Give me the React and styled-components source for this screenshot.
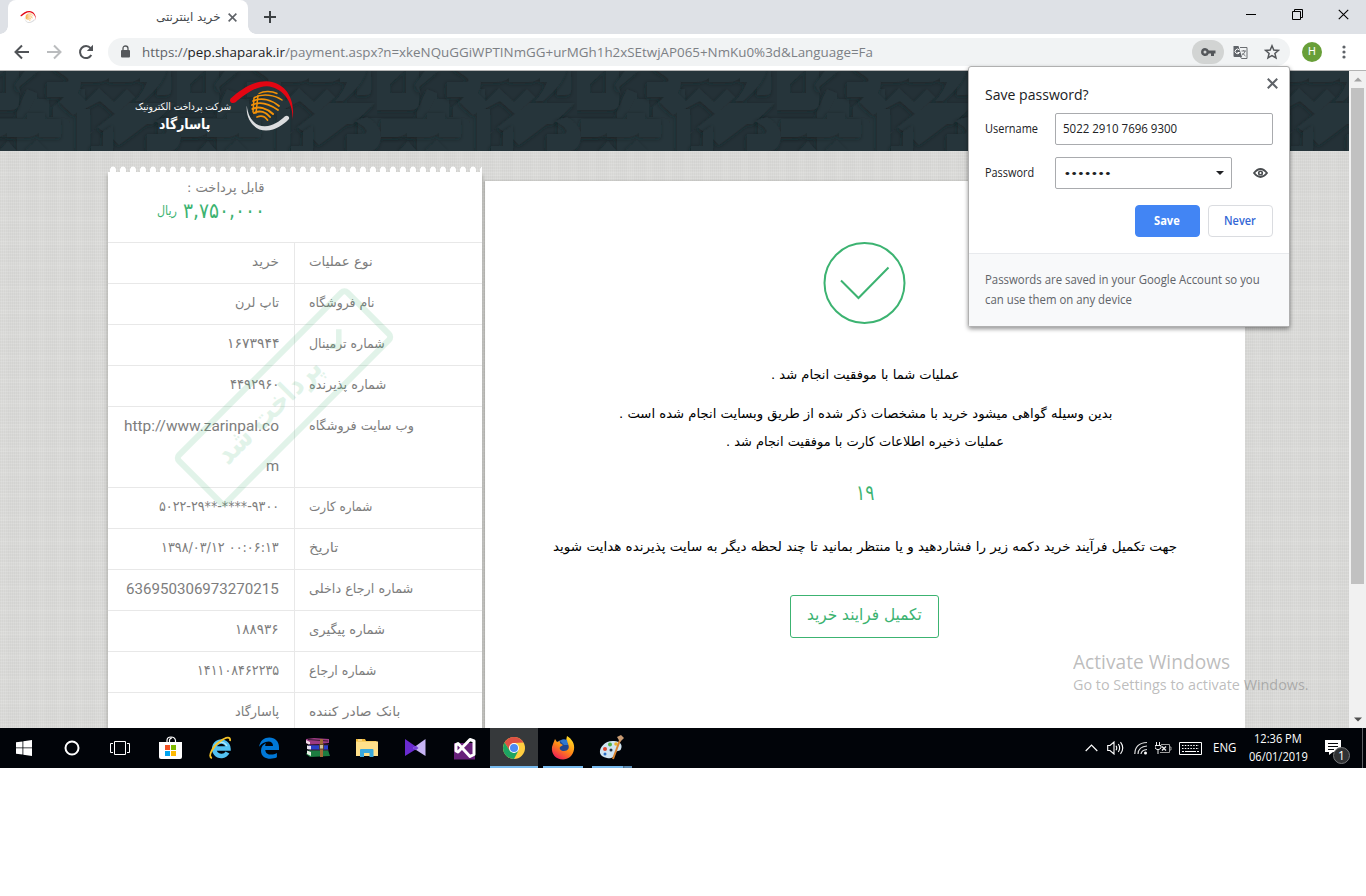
import React, { useLayoutEffect, useRef, useState } from "react";
import styled, { createGlobalStyle } from "styled-components";

const fa = `"DejaVu Sans Condensed", "DejaVu Sans", sans-serif`;
const ui = `"Open Sans", "Noto Sans", sans-serif`;
const green = "#3cb371";

const Global = createGlobalStyle`
  *, *::before, *::after { box-sizing: border-box; }
  body { margin: 0; background: #fff; font-family: ${ui}; overflow: hidden; }
  svg { display: block; flex: none; }
`;

/* ---------- text that keeps to a set width ---------- */
const FitBox = styled.span`
  display: inline-flex;
  justify-content: flex-start;
  direction: ltr;
  flex: none;
  width: ${(p) => p.$w}px;
  white-space: nowrap;
  color: ${(p) => p.$color || "inherit"};
  font-size: ${(p) => p.$size || 13}px;
  font-weight: ${(p) => p.$weight || 400};
  font-family: ${(p) => p.$font || "inherit"};
  line-height: 1.4;
`;
const FitInner = styled.span`
  flex: none;
  display: block;
  white-space: pre;
  transform-origin: 0 50%;
`;
function Fit({ w, size, color, weight, font, rtl, children }) {
  const ref = useRef(null);
  const [scale, setScale] = useState(1);
  useLayoutEffect(() => {
    const natural = ref.current.offsetWidth;
    if (natural) setScale(w / natural);
  }, [w, size]);
  return (
    <FitBox $w={w} $size={size} $color={color} $weight={weight} $font={font}>
      <FitInner ref={ref} dir={rtl ? "rtl" : "ltr"} style={{ transform: `scaleX(${scale})` }}>
        {children}
      </FitInner>
    </FitBox>
  );
}

/* ---------- browser chrome ---------- */
const Screen = styled.div`
  position: relative;
  width: 1366px;
  height: 768px;
  display: flex;
  flex-direction: column;
`;
const TabStrip = styled.div`
  height: 34px;
  background: #dee1e6;
  display: flex;
  align-items: flex-start;
  padding-left: 8px;
`;
const Tab = styled.div`
  position: relative;
  width: 240px;
  height: 34px;
  background: #fff;
  border-radius: 8px 8px 0 0;
  display: flex;
  align-items: center;
  padding: 0 11px 0 12px;
  color: #45494d;
  font-family: ${fa};
  &::before, &::after {
    content: "";
    position: absolute;
    bottom: 0;
    width: 8px;
    height: 8px;
  }
  &::before { left: -8px; background: radial-gradient(circle at 0 0, transparent 7.5px, #fff 8px); }
  &::after { right: -8px; background: radial-gradient(circle at 100% 0, transparent 7.5px, #fff 8px); }
`;
const Spring = styled.div`flex: 1;`;
const CloseSlot = styled.div`margin-left: 8px;`;
const NewTab = styled.div`margin: 10px 0 0 15px;`;
const WindowButton = styled.div`
  width: 46px;
  height: 29px;
  display: grid;
  place-items: center;
`;
const Toolbar = styled.div`
  height: 37px;
  background: #fff;
  border-bottom: 1px solid #b3b3b3;
  display: flex;
  align-items: center;
`;
const NavButton = styled.div`
  width: 32px;
  display: grid;
  place-items: center;
  margin-left: ${(p) => p.$first ? 6 : 0}px;
`;
const Omnibox = styled.div`
  width: 1182px;
  height: 28px;
  margin-left: 6px;
  border-radius: 14px;
  background: #f1f3f4;
  display: flex;
  align-items: center;
  padding: 0 2px 0 12px;
`;
const Url = styled.div`
  margin-left: 10px;
  padding-bottom: 2px;
  color: #7c8085;
  b { font-weight: 400; color: #202124; }
  i { font-style: normal; color: #5f6368; }
`;
const OmniAction = styled.div`
  width: 32px;
  height: 24px;
  border-radius: 12px;
  display: grid;
  place-items: center;
  background: ${(p) => p.$on ? "#d2d4d3" : "transparent"};
`;
const Avatar = styled.div`
  width: 20px;
  height: 20px;
  border-radius: 50%;
  background: #689f38;
  color: #fff;
  font: 11px/20px Roboto, sans-serif;
  text-align: center;
  margin: 0 20px 0 12px;
`;

/* ---------- page ---------- */
const Viewport = styled.div`
  height: 657px;
  display: flex;
  overflow: hidden;
`;
const Page = styled.div`
  width: 1349px;
  height: 657px;
  overflow: hidden;
  background-color: #d8d8d6;
  background-image:
    repeating-linear-gradient(0deg, rgba(255,255,255,.12) 0 1px, transparent 1px 3px),
    repeating-linear-gradient(90deg, rgba(120,120,115,.05) 0 1px, transparent 1px 2px),
    repeating-linear-gradient(90deg, rgba(255,255,255,.06) 0 7px, transparent 7px 19px),
    repeating-linear-gradient(0deg, rgba(255,255,255,.06) 0 5px, transparent 5px 23px);
`;
const Banner = styled.header`
  position: relative;
  height: 80px;
  background: #263238;
`;
const BannerArt = styled.svg`
  position: absolute;
  inset: 0;
`;
const Brand = styled.div`
  position: relative;
  display: flex;
  padding: 7px 0 0 132px;
  color: #fff;
  font-family: ${fa};
`;
const BrandNames = styled.div`
  width: 96px;
  padding: 22px 0 0 3px;
  display: flex;
  flex-direction: column;
  align-items: flex-start;
`;
const BrandBold = styled.div`padding-left: 24px;`;
const Columns = styled.main`
  display: flex;
  align-items: flex-start;
  padding-left: 108px;
`;
const Receipt = styled.section`
  position: relative;
  width: 374px;
  margin-top: 15px;
  color: #7d7d7d;
  font-family: ${fa};
`;
const Scallops = styled.div`
  height: 6px;
  background: radial-gradient(ellipse 3.6px 6px at 5px 6px, #fff 88%, rgba(190,190,185,.7) 100%, transparent) 0 0 / 10px 6px;
`;
const Sheet = styled.div`
  background: #fff;
  box-shadow: 0 4px 3px 1px rgba(90,90,80,.3);
  height: 600px;
`;
const AmountBlock = styled.div`
  height: 71px;
  padding: 7px 217px 0 0;
  border-bottom: 1px solid #e8e8e8;
  display: flex;
  flex-direction: column;
  align-items: flex-end;
`;
const Amount = styled.div`
  display: flex;
  align-items: center;
  gap: 6px;
  height: 27px;
  color: ${green};
`;
const Row = styled.div`
  display: flex;
  height: ${(p) => p.$tall ? 81 : 41}px;
  border-bottom: 1px solid #e8e8e8;
`;
const Value = styled.div`
  width: 187px;
  padding: 0 15px 0 0;
  border-right: 1px solid #e8e8e8;
  display: flex;
  flex-direction: column;
  align-items: flex-end;
`;
const Line = styled.div`
  height: 40px;
  padding-bottom: 2px;
  display: flex;
  align-items: center;
`;
const Label = styled.div`
  height: 40px;
  padding: 0 0 2px 14px;
  display: flex;
  align-items: center;
`;
const Stamp = styled.div`
  position: absolute;
  left: 54px;
  top: 195px;
  width: 244px;
  height: 73px;
  border: 6px solid ${green};
  border-radius: 7px;
  opacity: 0.15;
  transform: rotate(-45deg);
  color: ${green};
  display: flex;
  align-items: center;
  gap: 17px;
  padding: 0 0 4px 28px;
  pointer-events: none;
`;
const Result = styled.section`
  width: 760px;
  height: 600px;
  margin: 30px 0 0 3px;
  background: #fff;
  box-shadow: -1px 0 2px rgba(90,90,80,.35);
  color: #000;
  font-family: ${fa};
  display: flex;
  flex-direction: column;
  align-items: center;
  padding-top: 60px;
`;
const Para = styled.div`
  height: 28px;
  margin-top: ${(p) => p.$gap || 0}px;
  display: flex;
  align-items: center;
`;
const Finish = styled.button`
  width: 149px;
  height: 43px;
  margin: 34px 2px 0 0;
  padding: 0 0 3px;
  border: 1px solid ${green};
  border-radius: 3px;
  background: #fff;
  color: ${green};
  font-family: inherit;
  display: flex;
  align-items: center;
  justify-content: center;
`;
const ScrollBar = styled.div`
  width: 17px;
  height: 657px;
  background: #f1f1f1;
  display: flex;
  flex-direction: column;
  align-items: center;
`;
const ScrollArrow = styled.div`
  height: 17px;
  display: grid;
  place-items: center;
`;
const Thumb = styled.div`
  width: 13px;
  height: 496px;
  background: #c1c1c1;
`;

/* ---------- password bubble ---------- */
const Bubble = styled.div`
  position: absolute;
  left: 968px;
  top: 66px;
  width: 322px;
  height: 261px;
  border: 1px solid #b0b0b0;
  border-radius: 3px;
  background: #fff;
  box-shadow: 0 2px 4px rgba(0,0,0,.42);
  color: #202124;
  display: flex;
  flex-direction: column;
`;
const BubbleHead = styled.div`
  display: flex;
  justify-content: space-between;
  height: 46px;
  padding: 11px 11px 0 16px;
`;
const BubbleTitle = styled.div`margin-top: 5px;`;
const FieldRow = styled.div`
  display: flex;
  align-items: center;
  height: 32px;
  padding-left: 16px;
  margin-bottom: ${(p) => p.$gap}px;
`;
const FieldName = styled.div`width: 70px; display: flex;`;
const Field = styled.div`
  width: ${(p) => p.$w}px;
  height: 32px;
  border: 1px solid #a9abae;
  border-radius: 2px;
  display: flex;
  align-items: center;
  justify-content: space-between;
  padding: 0 7px 0 ${(p) => p.$pad || 7}px;
`;
const Eye = styled.div`margin-left: 21px;`;
const Actions = styled.div`
  display: flex;
  justify-content: flex-end;
  gap: 8px;
  padding-right: 16px;
`;
const Button = styled.div`
  width: 65px;
  height: 32px;
  border-radius: 4px;
  display: grid;
  place-items: center;
  padding-right: 1px;
  background: ${(p) => p.$primary ? "#4285f4" : "#fff"};
  border: 1px solid ${(p) => p.$primary ? "#4285f4" : "#dadce0"};
  color: ${(p) => p.$primary ? "#fff" : "#3367d6"};
`;
const BubbleFoot = styled.div`
  margin-top: 16px;
  flex: 1;
  border-top: 1px solid #e8eaed;
  background: #f8f9fa;
  color: #5f6368;
  padding: 16px;
  display: flex;
  flex-direction: column;
`;
const FootLine = styled.div`height: 20px; display: flex; align-items: center;`;

const Activation = styled.div`
  position: absolute;
  left: 1073px;
  top: 649px;
  color: rgba(125,125,125,.52);
  display: flex;
  flex-direction: column;
  span:last-child { line-height: 1.32; }
`;

/* ---------- taskbar ---------- */
const Taskbar = styled.footer`
  height: 40px;
  background: #010409;
  display: flex;
  align-items: stretch;
  color: #fff;
`;
const TaskSlot = styled.div`
  position: relative;
  width: ${(p) => p.$w || 49}px;
  display: grid;
  place-items: center;
  background: ${(p) => p.$active ? "linear-gradient(90deg, transparent 1px, #36393b 1px)" : "none"};
  margin-left: ${(p) => p.$shift || 0}px;
`;
const Running = styled.div`
  position: absolute;
  bottom: 0;
  left: ${(p) => p.$x}px;
  width: ${(p) => p.$w}px;
  height: 2px;
  background: ${(p) => p.$stack ? "linear-gradient(90deg,#76b9ed 31px,#44637c 31px,#5888b0 33px)" : "#76b9ed"};
`;
const Tray = styled.div`
  display: flex;
  align-items: center;
  width: 282px;
`;
const TrayItem = styled.div`
  width: ${(p) => p.$w}px;
  display: grid;
  place-items: center;
`;
const Clock = styled.div`
  width: 66px;
  display: flex;
  flex-direction: column;
  align-items: center;
  gap: 1px;
`;
const Badge = styled.div`
  position: absolute;
  left: 16px;
  top: 19px;
  width: 17px;
  height: 17px;
  border: 1px solid #77797b;
  border-radius: 50%;
  background: #303234;
  font: 12px/15px ${ui};
  text-align: center;
`;
const NoticeSlot = styled.div`
  position: relative;
  width: 45px;
  height: 40px;
  padding: 12px 0 0 8px;
`;
const DesktopEdge = styled.div`
  width: 1px;
  height: 40px;
  background: #5d6064;
`;

/* ---------- drawings ---------- */
const Cross = ({ s = 8, c = "#5f6368", w = 1.6 }) => (
  <svg width={s} height={s} viewBox="0 0 10 10" stroke={c} strokeWidth={(w * 10) / s}>
    <path d="M.7.7 9.3 9.3M9.3.7.7 9.3" />
  </svg>
);

const Logo = ({ w, h }) => (
  <svg width={w} height={h} viewBox="228 78 70 56" fill="none">
    <path d="M230.600 98.600C240 90 253 81 266.500 81.200C284 81.800 296 97 292.500 120C293.500 101 282 87.500 267 86.200C256 86 244 95 235.600 102.200C232 104.500 228.500 101.500 230.600 98.600Z" fill="#e30613" />
    <path d="M246.800 105.500C245.500 119 254 130.500 266 130.500C276 130.500 283.500 124.500 288.500 119.600C290.500 117 287.500 114.500 285 116.200C279 121.500 273.500 125.800 265 126.300C255 126.600 248 118 246.800 105.500Z" fill="#dcdddf" />
    <g stroke="#f39208" strokeLinecap="round">
      <path d="M259 93.500C264 90.500 272 91 277 93.500" strokeWidth="1.400" />
      <path d="M254.500 97.500C263 93 275 95 282 100" strokeWidth="1.500" />
      <path d="M253 101C262 97 272 100 279 106" strokeWidth="1.700" />
      <path d="M252 105C260 101 270 104.500 278 110" strokeWidth="1.800" />
      <path d="M252.500 109C259 105.500 267 108.500 273 114" strokeWidth="2" />
      <path d="M254 113C260 110 266 112 270 117" strokeWidth="2" />
      <path d="M257 117C262 115 265 116.500 267.500 120" strokeWidth="1.800" />
      <path d="M254 98 253 112M258 95.500 256 113" strokeWidth="1.500" />
    </g>
  </svg>
);

const BannerPattern = () => (
  <BannerArt width="1349" height="80">
    <defs>
      <filter id="emboss" x="-10%" y="-10%" width="120%" height="130%">
        <feDropShadow dx="-1" dy="1.500" stdDeviation="2" floodColor="#101d23" floodOpacity=".5" />
      </filter>
      <g id="letters" fill="#28343a">
        <g filter="url(#emboss)">
          <path d="M50 18 60 22V46H76V36L96 18H108V80H40V40Z" />
          <path d="M-6 47H48L58 28H72V47H84Q92 46 93 52V70L82 80 74 72 68 66H-6Z" />
          <path d="M181 47H214V66H181Z" />
          <path d="M-12 0H-6V20Q-6 24-12 24H-20V16Z" />
          <path d="M188 0H194V20Q194 24 188 24H180V16Z" />
        </g>
        <g filter="url(#emboss)">
          <path fillRule="evenodd" d="M0 0H42V31Q42 39 34 39H0ZM13 22H29V0H27L13 13Z" />
          <path d="M70 11H90Q94 9 88 5L74-4H104V10Q104 26 90 26H70Z" />
          <path d="M104-4H190Q188 12 166 30H158Q166 22 170 11H163V7Q158 11 152 11H132V7Q127 11 120 11H104Z" />
          <path d="M82 31 96 17 109 30 122 17 137 31 150 18 158 26 139 44 123 30 96 44Z" />
          <path d="M100 38H113V62L152 32H198L176 53H170L142 74 134 66 120 56 113 63V80H100Z" />
        </g>
        <g filter="url(#emboss)">
          <path d="M170 63H188Q192 60 186 55L178 50 190 46Q204 54 204 66 202 80 192 80H170Z" />
          <path d="M-30 63H-12Q-8 60-14 55L-22 50-10 46Q4 54 4 66 2 80-8 80H-30Z" />
          <path d="M4 48H50V42H68V48H84V66H62V62Q58 65 52 66H30V62Q26 65 20 66H4Z" />
          <path d="M22 80 31 70 40 80ZM48 80 60 69 71 80Z" />
          <path d="M42 16 54 6Q60 0 64 0H48L38 14 44 24Z" />
          <path d="M114 75H126V61L136 54V80H114Z" />
        </g>
      </g>
      <pattern id="calligraphy" x="-23" width="200" height="80" patternUnits="userSpaceOnUse">
        <rect width="200" height="80" fill="#243137" />
        <use href="#letters" />
      </pattern>
    </defs>
    <rect width="1349" height="80" fill="url(#calligraphy)" />
  </BannerArt>
);

const StoreIcon = () => (
  <svg width="24" height="24" viewBox="0 0 24 24">
    <path d="M8 6V4.500Q8 1 12 1T16.500 4.500V6M10.500 6V4Q11 2 13 2" fill="none" stroke="#fff" strokeWidth="1.200" />
    <path d="M0 6H23V21Q23 23 21 23H2Q0 23 0 21Z" fill="#fff" />
    <path d="M6 9h5v5H6z" fill="#f25022" /><path d="M12 9h5v5h-5z" fill="#7fba00" />
    <path d="M6 15h5v5H6z" fill="#00a4ef" /><path d="M12 15h5v5h-5z" fill="#ffb900" />
  </svg>
);
const IeIcon = () => (
  <svg width="24" height="24" viewBox="0 0 24 24" fill="none">
    <path d="M19.500 16.500A7.200 7.200 0 1 1 20.500 12.500H7" stroke="#53c2f1" strokeWidth="4.400" />
    <path d="M6 12A7 7 0 0 1 19 10" stroke="#b5ebff" strokeWidth="1.200" />
    <path d="M4 22C-1 21 5 10 12 5.500 18 1 23 0 22 5" stroke="#f5c327" strokeWidth="1.800" />
  </svg>
);
const EdgeIcon = () => (
  <svg width="22" height="22" viewBox="0 0 22 22">
    <path d="M1.200 9.800C2 3.500 6.500.5 11.300.5 17 .5 21 4.300 21 10.200V12.900H7.300C7.400 18 14.200 18.800 18.900 16V20.300C13 23.200 3 22.200 3 13.700 3 9.800 5.200 7.500 8 6.100 7.400 7 7.200 8 7.200 9.100H15C15 5.900 13.400 4.400 10.500 4.400 6.500 4.600 3.600 6.300 1.200 9.800Z" fill="#0078d7" />
  </svg>
);
const RarIcon = () => (
  <svg width="24" height="20" viewBox="0 0 24 20">
    <path d="M0 1 8 0 23 1V5L4 7 0 5Z" fill="#9d3b84" /><path d="M0 2 4 4V7L0 5Z" fill="#f2dbe8" />
    <path d="M3 7H22V12H3Z" fill="#2a3fc9" /><path d="M1 7.500 5 8V12L1 11Z" fill="#e9e3f2" />
    <path d="M3 12H22L24 18 4 19 0 16Z" fill="#1c7d40" /><path d="M1 12.500 5 14V18L1 16Z" fill="#e7f0e6" />
    <path d="M3 6.800H23M3 12H23M2 1.500 22 3" stroke="#3b1a33" strokeWidth="1" />
    <path d="M14 1H17V19H14Z" fill="#a06c36" /><path d="M13.500 6.500H17.500V11H13.500Z" fill="#cfc19b" stroke="#553719" strokeWidth=".8" />
  </svg>
);
const FolderIcon = () => (
  <svg width="22" height="20" viewBox="0 0 22 20">
    <path d="M0 1H9L10 3H20.500V7H0Z" fill="#f0b93a" /><path d="M0 3.500H22V18H0Z" fill="#ffe08a" />
    <path d="M2 2H6" stroke="#fff3cc" />
    <path d="M4 19V12Q4 11 5 11H16.500Q17.500 11 17.500 12V19H13.500V15H8V19Z" fill="#3aa9dc" />
  </svg>
);
const KmIcon = () => (
  <svg width="22" height="20" viewBox="0 0 22 20">
    <path d="M0 1 13 10 0 18Z" fill="#6a2bd0" /><path d="M20.500 1V18L8 10Z" fill="#c7b5f5" /><path d="M8 10 11 7.800 13.500 10 11 12.200Z" fill="#7845d8" />
  </svg>
);
const VsIcon = () => (
  <svg width="24" height="24" viewBox="0 0 24 24">
    <path d="M1 7H22V23.500H1Z" fill="#68217a" />
    <path d="M3 8.500V15L5 16 17 3.500 21 5V18.500L17 20.500 5 7.500Z" fill="none" stroke="#fff" strokeWidth="3" strokeLinejoin="round" />
  </svg>
);
const ChromeIcon = () => (
  <svg width="22" height="22" viewBox="0 0 22 22">
    <circle cx="11" cy="11" r="11" fill="#ffcd40" />
    <path d="M1.500 5.500A11 11 0 0 1 20.500 5.500L11 6 6.700 13.500Z" fill="#dd5144" />
    <path d="M1.500 5.500A11 11 0 0 0 11 22L15.500 13.500 11 15.500 6.700 13.500Z" fill="#1da462" />
    <circle cx="11" cy="11" r="5" fill="#fff" /><circle cx="11" cy="11" r="4" fill="#4c8bf5" />
  </svg>
);
const FirefoxIcon = () => (
  <svg width="24" height="24" viewBox="0 0 24 24">
    <defs><linearGradient id="fox" x1=".8" y1="0" x2=".2" y2="1"><stop stopColor="#ffe226" /><stop offset=".5" stopColor="#ff8a16" /><stop offset="1" stopColor="#ed145b" /></linearGradient></defs>
    <circle cx="12" cy="12.500" r="9" fill="#20458f" />
    <path d="M2 8 4 3 6 6 9 5C8 8 11 8 12 9L9 11C8 13 10 15 13 15 17 15 19 12 17 8L15 5 16 0C21 3 24 8 23 13.500 22 20 17 23.500 12 23.500 5 23.500 0 18 1 11Z" fill="url(#fox)" />
    <path d="M9 5Q12 2 16 4L17 9 13 9Z" fill="#2f77cf" />
  </svg>
);
const PaintIcon = () => (
  <svg width="26" height="26" viewBox="0 0 26 26">
    <path d="M1 18C0 12 7 5 15 6 21 6 24 10 22 14 21 17 17 15 16 18 15 23 11 24 8 23 4 22 2 21 1 18Z" fill="#cfe4f2" />
    <circle cx="6" cy="14" r="2" fill="#e0442e" /><circle cx="11" cy="9.500" r="2" fill="#52b148" /><circle cx="17" cy="9" r="1.800" fill="#eeb429" /><circle cx="6" cy="19" r="1.500" fill="#2d6fc4" /><circle cx="12" cy="15" r="1.500" fill="#253545" />
    <path d="M21 5 14 24" stroke="#d9832e" strokeWidth="2" /><path d="M18 2 22 0 25 3 21 7Z" fill="#c89a72" />
  </svg>
);

const apps = [
  [StoreIcon], [IeIcon], [EdgeIcon], [RarIcon], [FolderIcon], [KmIcon], [VsIcon],
  [ChromeIcon, { x: 1, w: 48 }, true],
  [FirefoxIcon, { x: 5, w: 40 }],
  [PaintIcon, { x: 5, w: 40, stack: true }],
];

const rows = [
  ["نوع عملیات", 64, "خرید", 27, true],
  ["نام فروشگاه", 65, "تاپ لرن", 44, true],
  ["شماره ترمینال", 76, "۱۶۷۳۹۴۴", 52],
  ["شماره پذیرنده", 77, "۴۴۹۲۹۶۰", 49],
  ["وب سایت فروشگاه", 105, "http://www.zarinpal.co", 155, false, 15, "m"],
  ["شماره کارت", 63, "۵۰۲۲-۲۹**-****-۹۳۰۰", 120],
  ["تاریخ", 29, "۱۳۹۸/۰۳/۱۲ ۰۰:۰۶:۱۳", 118],
  ["شماره ارجاع داخلی", 104, "636950306973270215", 153, false, 15],
  ["شماره پیگیری", 76, "۱۸۸۹۳۶", 44],
  ["شماره ارجاع", 67, "۱۴۱۱۰۸۴۶۲۲۳۵", 82],
  ["بانک صادر کننده", 91, "پاسارگاد", 44, true],
];

export default function App() {
  return (
    <>
      <Global />
      <Screen>
        <TabStrip>
          <Tab>
            <Logo w={17} h={14} />
            <Spring />
            <Fit w={64} size={12} rtl>خرید اینترنتی</Fit>
            <CloseSlot><Cross s={9} /></CloseSlot>
          </Tab>
          <NewTab>
            <svg width="14" height="14" viewBox="0 0 14 14" stroke="#3c4043" strokeWidth="2"><path d="M7 1V13M1 7H13" /></svg>
          </NewTab>
          <Spring />
          <WindowButton><svg width="11" height="11" stroke="#000"><path d="M0 5.500H10" /></svg></WindowButton>
          <WindowButton><svg width="11" height="11" stroke="#000" fill="none"><path d="M.5 2.500H8.500V10.500H.5ZM2.500 2.500V.5H10.500V8.500H8.500" /></svg></WindowButton>
          <WindowButton><Cross s={11} c="#000" w={1.1} /></WindowButton>
        </TabStrip>
        <Toolbar>
          <NavButton $first>
            <svg width="16" height="16" viewBox="0 0 16 16" fill="none" stroke="#505357" strokeWidth="2"><path d="M15 8H2M8 1.500 1.500 8 8 14.500" /></svg>
          </NavButton>
          <NavButton>
            <svg width="16" height="16" viewBox="0 0 16 16" fill="none" stroke="#babcbe" strokeWidth="2"><path d="M1 8H14M8 1.500 14.500 8 8 14.500" /></svg>
          </NavButton>
          <NavButton>
            <svg width="16" height="16" viewBox="0 0 16 16" fill="none" stroke="#505357" strokeWidth="2"><path d="M13.300 11A6 6 0 1 1 12.600 4.200" /><path d="M15 .8V7H8.800Z" fill="#505357" stroke="none" /></svg>
          </NavButton>
          <Omnibox>
            <svg width="12" height="14" viewBox="0 0 12 14"><path d="M2 5H9Q10 5 10 6V11.500Q10 12.500 9 12.500H2Q1 12.500 1 11.500V6Q1 5 2 5Z" fill="#55585b" /><path d="M3 5V3.500Q3 1 5.500 1T8 3.500V5" fill="none" stroke="#55585b" strokeWidth="1.300" /></svg>
            <Url>
              <Fit w={731} size={13.5} font={ui}>
                <i>https://</i><b>pep.shaparak.ir</b>/payment.aspx?n=xkeNQuGGiWPTINmGG+urMGh1h2xSEtwjAP065+NmKu0%3d&amp;Language=Fa
              </Fit>
            </Url>
            <Spring />
            <OmniAction $on>
              <svg width="15" height="10" viewBox="0 0 15 10"><path fillRule="evenodd" d="M4 1A4 4 0 0 1 7.800 3.500H14.500V6.500H13V9H10V6.500H7.800A4 4 0 1 1 4 1ZM4 3.500A1.500 1.500 0 1 0 4 6.500 1.500 1.500 0 0 0 4 3.500Z" fill="#54575a" /></svg>
            </OmniAction>
            <OmniAction>
              <svg width="15" height="15" viewBox="0 0 15 15" fill="none"><path d="M7 2.500H14V13.500H8.500L7 11" stroke="#6b6e72" /><path d="M.5 1H5.500L9 12H1.500Q.5 12 .5 11Z" fill="#5f6368" /><path d="M6.300 5A2.300 2.300 0 1 0 6.500 7.500H4.500" stroke="#fff" /><path d="M8.500 6H13M10.700 5V6M12 6Q11.500 9 9 10M9.500 8Q11 10 12.500 11" stroke="#6b6e72" strokeWidth=".9" /></svg>
            </OmniAction>
            <OmniAction>
              <svg width="16" height="16" viewBox="0 0 16 16" fill="none" stroke="#54575a" strokeWidth="1.500"><path d="M8 1.800 9.800 6 14.400 6.400 10.900 9.400 12 13.900 8 11.500 4 13.900 5.100 9.400 1.600 6.400 6.200 6Z" /></svg>
            </OmniAction>
          </Omnibox>
          <Avatar>H</Avatar>
          <svg width="4" height="14" fill="#5f6368"><circle cx="2" cy="2" r="1.600" /><circle cx="2" cy="7" r="1.600" /><circle cx="2" cy="12" r="1.600" /></svg>
        </Toolbar>

        <Viewport>
          <Page>
            <Banner>
              <BannerPattern />
              <Brand>
                <BrandNames>
                  <Fit w={96} size={10} rtl>شرکت پرداخت الکترونیک</Fit>
                  <BrandBold><Fit w={51} size={14} weight={700} rtl>پاسارگاد</Fit></BrandBold>
                </BrandNames>
                <Logo w={70} h={56} />
              </Brand>
            </Banner>
            <Columns>
              <Receipt>
                <Scallops />
                <Sheet>
                  <AmountBlock>
                    <Fit w={78} size={13} rtl>قابل پرداخت :</Fit>
                    <Amount>
                      <Fit w={20} size={13} rtl>ریال</Fit>
                      <Fit w={82} size={21.5}>۳,۷۵۰,۰۰۰</Fit>
                    </Amount>
                  </AmountBlock>
                  {rows.map(([label, lw, value, vw, rtl, latin, rest]) => (
                    <Row key={label} $tall={!!rest}>
                      <Value>
                        <Line><Fit w={vw} size={latin || (rtl ? 13 : 14)} rtl={rtl} font={latin && "Roboto, sans-serif"}>{value}</Fit></Line>
                        {rest && <Line><Fit w={13} size={15} font="Roboto, sans-serif">{rest}</Fit></Line>}
                      </Value>
                      <Label><Fit w={lw} size={13} rtl>{label}</Fit></Label>
                    </Row>
                  ))}
                </Sheet>
                <Stamp>
                  <Fit w={136} size={30} weight={700} rtl>پرداخت شد</Fit>
                  <svg width="26" height="26" viewBox="0 0 26 26" fill="none" stroke={green} strokeWidth="5.500"><path d="M4 11 10 17 22 5" /></svg>
                </Stamp>
              </Receipt>
              <Result>
                <svg width="84" height="84" viewBox="0 0 84 84" fill="none" stroke={green} strokeWidth="2">
                  <circle cx="41.500" cy="42" r="40" /><path d="M18 39.500 35.500 57 65.500 26.500" />
                </svg>
                <Para $gap={36}><Fit w={188} size={13} rtl>عملیات شما با موفقیت انجام شد .</Fit></Para>
                <Para $gap={11}><Fit w={493} size={13} rtl>بدین وسیله گواهی میشود خرید با مشخصات ذکر شده از طریق وبسایت انجام شده است .</Fit></Para>
                <Para><Fit w={278} size={13} rtl>عملیات ذخیره اطلاعات کارت با موفقیت انجام شد .</Fit></Para>
                <Para $gap={24}><Fit w={18} size={21} color={green}>۱۹</Fit></Para>
                <Para $gap={25}><Fit w={624} size={13} rtl>جهت تکمیل فرآیند خرید دکمه زیر را فشاردهید و یا منتظر بمانید تا چند لحظه دیگر به سایت پذیرنده هدایت شوید</Fit></Para>
                <Finish><Fit w={115} size={16} rtl>تکمیل فرایند خرید</Fit></Finish>
              </Result>
            </Columns>
          </Page>
          <ScrollBar>
            <ScrollArrow><svg width="8" height="5"><path d="M0 4.500 4 .5 8 4.500Z" fill="#a3a3a3" /></svg></ScrollArrow>
            <Thumb />
            <Spring />
            <ScrollArrow><svg width="8" height="5"><path d="M0 .5 4 4.500 8 .5Z" fill="#505050" /></svg></ScrollArrow>
          </ScrollBar>
        </Viewport>

        <Taskbar>
          <TaskSlot $w={48}>
            <svg width="16" height="16" fill="#fff"><path d="M0 2.300 6.500 1.400V7.500H0ZM7.300 1.300 16 0V7.500H7.300ZM0 8.300H6.500V14.600L0 13.700ZM7.300 8.300H16V16L7.300 14.700Z" /></svg>
          </TaskSlot>
          <TaskSlot $w={48}>
            <svg width="16" height="16"><circle cx="8" cy="8" r="6.500" fill="none" stroke="#fff" strokeWidth="2" /></svg>
          </TaskSlot>
          <TaskSlot $w={48}>
            <svg width="20" height="14" fill="none" stroke="#fff"><path d="M4.500.5H15.500V13.500H4.500ZM3 2.500H.5V11.500H3M17 2.500H19.500V11.500H17" /></svg>
          </TaskSlot>
          {apps.map(([Icon, run, active], i) => (
            <TaskSlot key={i} $shift={i ? 0 : 2} $active={active}>
              <Icon />
              {run && <Running $x={run.x} $w={run.w} $stack={run.stack} />}
            </TaskSlot>
          ))}
          <Spring />
          <Tray>
            <TrayItem $w={14}><svg width="13" height="8" fill="none" stroke="#fff" strokeWidth="1.200"><path d="M.7 7 6.500 1.200 12.300 7" /></svg></TrayItem>
            <TrayItem $w={34}><svg width="17" height="14" fill="none" stroke="#fff" strokeWidth="1.100"><path d="M.7 4.500H3L7 1V13L3 9.500H.7ZM9 4.700Q10.500 7 9 9.300M11.300 3Q14 7 11.300 11M13.500 1.200Q18 7 13.500 12.800" /></svg></TrayItem>
            <TrayItem $w={18}><svg width="14" height="14" fill="none" stroke="#ddd" strokeWidth="1.200"><path d="M.8 13Q1 2 13 1.500M4 13Q4.500 5.500 13 5M7 13Q7.500 9 13 8.500" /><circle cx="11.500" cy="12" r="1.500" fill="#fff" stroke="none" /></svg></TrayItem>
            <TrayItem $w={26}><svg width="17" height="13" fill="none" stroke="#eee"><path d="M1.500 0V3M4.500 0V3M0 3.500H6V6L4 7.500H2L0 6ZM3 8V12" /><path d="M6 2.500H14.500V10.500H5M15 5H16V8H15" stroke="#a0a0a0" /><path d="M7 4.500 11 8.500M11 4.500 7 8.500" strokeWidth="1.300" /></svg></TrayItem>
            <TrayItem $w={28}>
              <svg width="23" height="13" fill="none" stroke="#fff"><path d="M.5.5H22.500V12.500H.5Z" /><path d="M3 3.500H20M3 6.500H20" strokeDasharray="1.500 1.300" /><path d="M3 9.500H5M6 9.500H17M18 9.500H20" /></svg>
            </TrayItem>
            <TrayItem $w={41}><Fit w={23} size={12}>ENG</Fit></TrayItem>
            <TrayItem $w={66}>
              <Clock><Fit w={48} size={12}>12:36 PM</Fit><Fit w={59} size={12}>06/01/2019</Fit></Clock>
            </TrayItem>
            <Spring />
            <NoticeSlot>
              <svg width="16" height="16"><path d="M0 0H16V12H8L4 15V12H0Z" fill="#fff" /><path d="M3 3.500H13M3 6.500H13M3 9.500H9" stroke="#05070b" /></svg>
              <Badge>1</Badge>
            </NoticeSlot>
            <DesktopEdge />
            <TrayItem $w={3} />
          </Tray>
        </Taskbar>

        <Activation>
          <Fit w={157} size={20}>Activate Windows</Fit>
          <Fit w={236} size={14.5}>Go to Settings to activate Windows.</Fit>
        </Activation>

        <Bubble>
          <BubbleHead>
            <BubbleTitle><Fit w={104} size={15}>Save password?</Fit></BubbleTitle>
            <Cross s={11} w={2} />
          </BubbleHead>
          <FieldRow $gap={12}>
            <FieldName><Fit w={53} size={12}>Username</Fit></FieldName>
            <Field $w={218}><Fit w={114} size={12}>5022 2910 7696 9300</Fit></Field>
          </FieldRow>
          <FieldRow $gap={16}>
            <FieldName><Fit w={49} size={12}>Password</Fit></FieldName>
            <Field $w={177} $pad={8}>
              <Fit w={47} size={13}>•••••••</Fit>
              <svg width="8" height="4"><path d="M0 0H8L4 4Z" fill="#202124" /></svg>
            </Field>
            <Eye>
              <svg width="15" height="10" viewBox="0 0 15 10" fill="none"><path d="M1 5Q7.500-3 14 5 7.500 13 1 5Z" stroke="#4a4d50" strokeWidth="1.800" /><circle cx="7.500" cy="5" r="1.800" stroke="#4a4d50" strokeWidth="1.600" /></svg>
            </Eye>
          </FieldRow>
          <Actions>
            <Button $primary><Fit w={26} size={12} weight={700}>Save</Fit></Button>
            <Button><Fit w={32} size={12} weight={600}>Never</Fit></Button>
          </Actions>
          <BubbleFoot>
            <FootLine><Fit w={275} size={12}>Passwords are saved in your Google Account so you</Fit></FootLine>
            <FootLine><Fit w={147} size={12}>can use them on any device</Fit></FootLine>
          </BubbleFoot>
        </Bubble>
      </Screen>
    </>
  );
}
